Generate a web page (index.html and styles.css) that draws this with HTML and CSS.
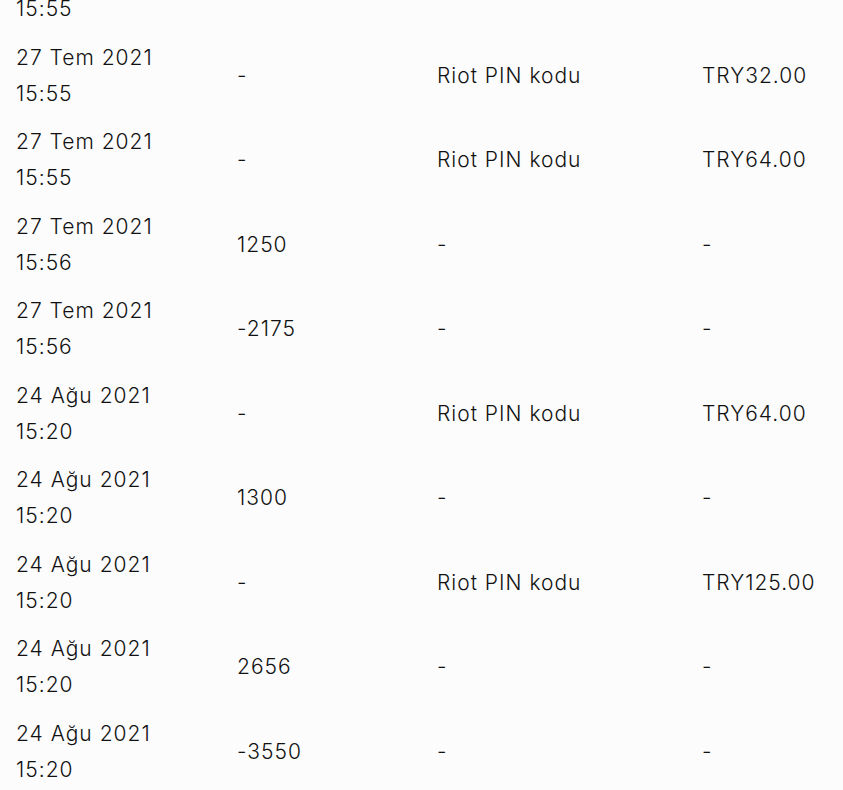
FILE: index.html
```html
<!DOCTYPE html>
<html lang="tr">
<head>
<meta charset="utf-8">
<link rel="stylesheet" href="styles.css">
</head>
<body>
<div class="table">
  <div class="row"><div class="c date">27 Tem 2021<br>15:55</div><div class="c num"></div><div class="c desc"></div><div class="c amt"></div></div>
  <div class="row"><div class="c date">27 Tem 2021<br>15:55</div><div class="c num">-</div><div class="c desc">Riot PIN kodu</div><div class="c amt">TRY32.00</div></div>
  <div class="row"><div class="c date">27 Tem 2021<br>15:55</div><div class="c num">-</div><div class="c desc">Riot PIN kodu</div><div class="c amt">TRY64.00</div></div>
  <div class="row"><div class="c date">27 Tem 2021<br>15:56</div><div class="c num">1250</div><div class="c desc">-</div><div class="c amt">-</div></div>
  <div class="row"><div class="c date">27 Tem 2021<br>15:56</div><div class="c num">-2175</div><div class="c desc">-</div><div class="c amt">-</div></div>
  <div class="row"><div class="c date">24 Ağu 2021<br>15:20</div><div class="c num">-</div><div class="c desc">Riot PIN kodu</div><div class="c amt">TRY64.00</div></div>
  <div class="row"><div class="c date">24 Ağu 2021<br>15:20</div><div class="c num">1300</div><div class="c desc">-</div><div class="c amt">-</div></div>
  <div class="row"><div class="c date">24 Ağu 2021<br>15:20</div><div class="c num">-</div><div class="c desc">Riot PIN kodu</div><div class="c amt">TRY125.00</div></div>
  <div class="row"><div class="c date">24 Ağu 2021<br>15:20</div><div class="c num">2656</div><div class="c desc">-</div><div class="c amt">-</div></div>
  <div class="row"><div class="c date">24 Ağu 2021<br>15:20</div><div class="c num">-3550</div><div class="c desc">-</div><div class="c amt">-</div></div>
</div>
</body>
</html>
```
FILE: styles.css
```css
html, body {
  margin: 0;
  padding: 0;
  background: #fcfcfc;
}
body {
  font-family: Inter, "Noto Sans", sans-serif;
  font-size: 21px;
  font-weight: 300;
  letter-spacing: 1px;
  color: #111111;
  overflow: hidden;
}
.table {
  margin-top: -51px;
  display: flex;
  flex-direction: column;
}
.row {
  display: grid;
  grid-template-columns: 221px 200px 265px 1fr;
  align-items: center;
  height: 84.5px;
  padding-left: 16px;
}
.c {
  line-height: 36px;
}
```
